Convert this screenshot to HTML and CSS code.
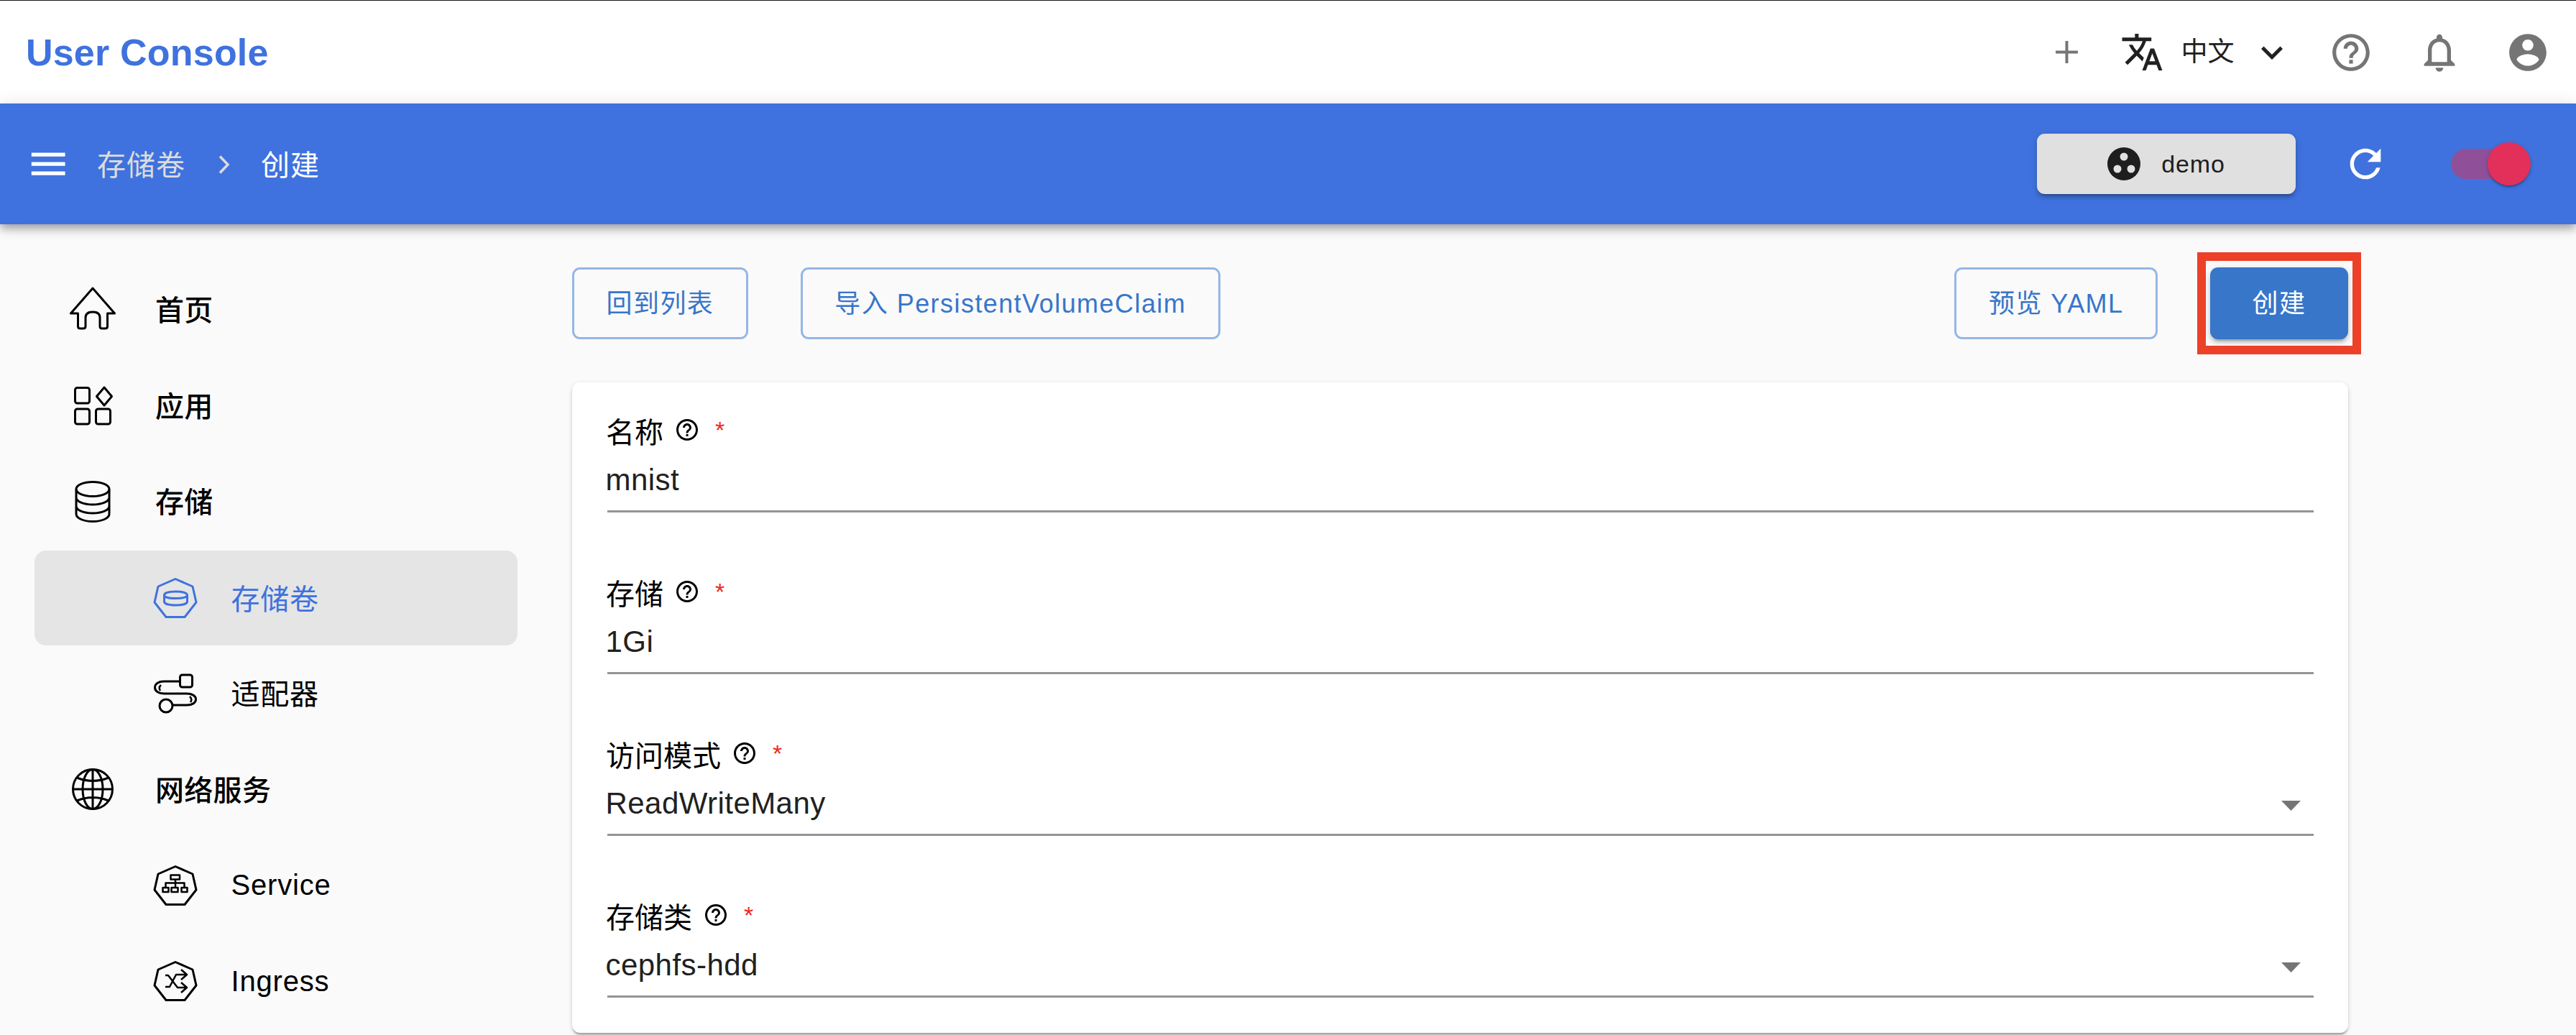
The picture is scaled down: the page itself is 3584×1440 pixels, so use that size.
FILE: index.html
```html
<!DOCTYPE html>
<html lang="zh-CN">
<head>
<meta charset="utf-8">
<title>User Console</title>
<link rel="stylesheet" href="styles.css">
</head>
<body>
<header class="topbar">
  <div class="logo">User Console</div>
  <div class="top-actions">
    <svg class="ic ic-plus" viewBox="0 0 24 24"><path d="M19 12.9h-6.1V19h-1.8v-6.100H5v-1.800h6.100V5h1.800v6.100H19z"/></svg>
    <svg class="ic ic-translate" viewBox="0 0 24 24"><path d="M12.870 15.070l-2.540-2.510.030-.030c1.740-1.940 2.980-4.170 3.710-6.530H17V4h-7V2H8v2H1v1.990h11.170C11.500 7.920 10.440 9.750 9 11.350 8.070 10.320 7.300 9.190 6.690 8h-2c.730 1.630 1.730 3.170 2.980 4.560l-5.090 5.020L4 19l5-5 3.110 3.110.760-2.040zM18.500 10h-2L12 22h2l1.120-3h4.750L21 22h2l-4.500-12zm-2.620 7l1.620-4.330L19.120 17h-3.240z"/></svg>
    <span class="lang">中文</span>
    <svg class="ic ic-chev" viewBox="0 0 24 24"><path d="M16.590 8.590L12 13.170 7.410 8.590 6 10l6 6 6-6z"/></svg>
    <svg class="ic ic-help" viewBox="0 0 24 24"><path d="M11 18h2v-2h-2v2zm1-16C6.480 2 2 6.480 2 12s4.480 10 10 10 10-4.480 10-10S17.520 2 12 2zm0 18c-4.410 0-8-3.590-8-8s3.590-8 8-8 8 3.590 8 8-3.590 8-8 8zm0-14c-2.210 0-4 1.790-4 4h2c0-1.100.900-2 2-2s2 .900 2 2c0 2-3 1.750-3 5h2c0-2.250 3-2.500 3-5 0-2.210-1.790-4-4-4z"/></svg>
    <svg class="ic ic-bell" viewBox="0 0 24 24"><path d="M12 22c1.100 0 2-.900 2-2h-4c0 1.100.890 2 2 2zm6-6v-5c0-3.070-1.640-5.640-4.500-6.320V4c0-.830-.670-1.500-1.500-1.500s-1.500.670-1.500 1.500v.680C7.630 5.360 6 7.920 6 11v5l-2 2v1h16v-1l-2-2zm-2 1H8v-6c0-2.480 1.510-4.500 4-4.500s4 2.020 4 4.500v6z"/></svg>
    <svg class="ic ic-account" viewBox="0 0 24 24"><path d="M12 2C6.480 2 2 6.480 2 12s4.480 10 10 10 10-4.480 10-10S17.520 2 12 2zm0 3c1.660 0 3 1.340 3 3s-1.340 3-3 3-3-1.340-3-3 1.340-3 3-3zm0 14.200c-2.500 0-4.710-1.280-6-3.220.030-1.990 4-3.080 6-3.080 1.990 0 5.970 1.090 6 3.080-1.290 1.940-3.500 3.220-6 3.220z"/></svg>
  </div>
</header>

<div class="appbar">
  <div class="crumbs">
    <svg class="ic ic-menu" viewBox="0 0 24 24"><path d="M3 18h18v-2H3v2zm0-5h18v-2H3v2zm0-7v2h18V6H3z"/></svg>
    <span class="crumb">存储卷</span>
    <svg class="crumb-sep" viewBox="0 0 16 26"><path d="M2 1.500 13 13 2 24.500"/></svg>
    <span class="crumb crumb-now">创建</span>
  </div>
  <div class="bar-actions">
    <button class="ns-btn">
      <svg class="ns-ic" viewBox="0 0 46 46"><circle class="ns-disc" cx="23" cy="23" r="23"/><circle class="ns-dot" cx="23" cy="13" r="5.500"/><circle class="ns-dot" cx="14" cy="30" r="5.500"/><circle class="ns-dot" cx="33" cy="30" r="5.500"/></svg>
      <span>demo</span>
    </button>
    <svg class="ic ic-refresh" viewBox="0 0 24 24"><path d="M17.650 6.350C16.200 4.900 14.210 4 12 4c-4.420 0-7.990 3.580-7.990 8s3.570 8 7.990 8c3.730 0 6.840-2.550 7.730-6h-2.080c-.820 2.330-3.040 4-5.650 4-3.310 0-6-2.690-6-6s2.690-6 6-6c1.660 0 3.140.690 4.220 1.780L13 11h7V4l-2.350 2.350z"/></svg>
    <div class="switch"><span class="track"></span><span class="thumb"></span></div>
  </div>
</div>

<div class="layout">
  <nav class="side">
    <a class="row">
      <svg class="nav-ic" viewBox="0 0 64 64"><path d="M32 2 1.500 37H11.500V55Q11.500 58 14.500 58H19Q22 58 22 55V43Q22 35 32 35T42 43V55Q42 58 45 58H49.500Q52.500 58 52.500 55V37H62.500Z"/></svg>
      <span>首页</span>
    </a>
    <a class="row">
      <svg class="nav-ic" viewBox="0 0 64 64"><rect x="7.500" y="7.500" width="20" height="21.500" rx="3"/><rect x="7.500" y="37" width="20" height="21" rx="3"/><rect x="36.500" y="37" width="20" height="21" rx="3"/><path d="M48 7 58.500 19.500 48 32 37.500 19.500Z"/></svg>
      <span>应用</span>
    </a>
    <a class="row">
      <svg class="nav-ic" viewBox="0 0 64 64"><g transform="translate(7 3)"><ellipse cx="25" cy="11.500" rx="23" ry="10"/><path d="M2 11.500V46C2 52 12 56.500 25 56.500S48 52 48 46V11.500M2 23C2 28.500 12 33 25 33S48 28.500 48 23M2 35C2 40.500 12 45 25 45S48 40.500 48 35"/></g></svg>
      <span>存储</span>
    </a>
    <a class="row sub active">
      <svg class="sub-ic" viewBox="0 0 60 56"><path d="M30 1.500 54 12 59 34 43 54.500H17L1 34 6 12Z"/><path d="M14.500 24V33C14.500 36 21 38 30.500 38S46.500 36 46.500 33V24M14.500 24C14.500 21 21 19 30.500 19S46.500 21 46.500 24 40 28.500 30.500 28.500 14.500 27 14.500 24Z"/></svg>
      <span>存储卷</span>
    </a>
    <a class="row sub">
      <svg class="sub-ic" viewBox="14 9 60 56"><rect x="50.500" y="11" width="17" height="17" rx="3"/><path d="M50 20H28C21 20 15.500 23 15.500 28.500S21 37 28 37H60C67 37 72.500 40 72.500 45S67 53 60 53H40"/><circle cx="31" cy="54" r="9"/><path class="thin" d="M24 25Q20 28.500 23 33M64 41Q68 45 65 49"/></svg>
      <span>适配器</span>
    </a>
    <a class="row">
      <svg class="nav-ic" viewBox="0 0 64 64"><g transform="translate(3 3)"><circle cx="29" cy="29" r="27.500"/><ellipse cx="29" cy="29" rx="14" ry="27.500"/><path d="M29 1.500V56.500M1.500 29H56.500M7 13Q29 22 51 13M7 45Q29 36 51 45"/></g></svg>
      <span>网络服务</span>
    </a>
    <a class="row sub">
      <svg class="sub-ic" viewBox="0 0 60 56"><path d="M30 1.500 54 12 59 34 43 54.500H17L1 34 6 12Z"/><path class="thin" d="M23.500 13.500H36V19.500H23.500ZM12.500 31H20.500V37H12.500ZM24.500 31H33.500V37H24.500ZM38.500 31H46.500V37H38.500ZM30 19.500V31M16.500 31V24.500H42.500V31"/></svg>
      <span class="latin">Service</span>
    </a>
    <a class="row sub">
      <svg class="sub-ic" viewBox="0 0 60 56"><path d="M30 1.500 54 12 59 34 43 54.500H17L1 34 6 12Z"/><path class="thin" d="M16 20H20L33 37H46M16 36H22L31 19H46M38 12 46 19 38 26M38 30 46 37 38 44"/></svg>
      <span class="latin">Ingress</span>
    </a>
  </nav>

  <main class="content">
    <div class="toolbar">
      <div class="tool-group">
        <button class="btn">回到列表</button>
        <button class="btn">导入 PersistentVolumeClaim</button>
      </div>
      <div class="tool-group">
        <button class="btn">预览 YAML</button>
        <button class="btn btn-primary">创建</button>
      </div>
    </div>

    <section class="card">
      <div class="field">
        <div class="label">名称<svg class="tip" viewBox="0 0 24 24"><path d="M11 18h2v-2h-2v2zm1-16C6.480 2 2 6.480 2 12s4.480 10 10 10 10-4.480 10-10S17.520 2 12 2zm0 18c-4.410 0-8-3.590-8-8s3.590-8 8-8 8 3.590 8 8-3.590 8-8 8zm0-14c-2.210 0-4 1.790-4 4h2c0-1.100.900-2 2-2s2 .900 2 2c0 2-3 1.750-3 5h2c0-2.250 3-2.500 3-5 0-2.210-1.790-4-4-4z"/></svg><span class="req">*</span></div>
        <div class="value">mnist</div>
      </div>
      <div class="field">
        <div class="label">存储<svg class="tip" viewBox="0 0 24 24"><path d="M11 18h2v-2h-2v2zm1-16C6.480 2 2 6.480 2 12s4.480 10 10 10 10-4.480 10-10S17.520 2 12 2zm0 18c-4.410 0-8-3.590-8-8s3.590-8 8-8 8 3.590 8 8-3.590 8-8 8zm0-14c-2.210 0-4 1.790-4 4h2c0-1.100.900-2 2-2s2 .900 2 2c0 2-3 1.750-3 5h2c0-2.250 3-2.500 3-5 0-2.210-1.790-4-4-4z"/></svg><span class="req">*</span></div>
        <div class="value">1Gi</div>
      </div>
      <div class="field">
        <div class="label">访问模式<svg class="tip" viewBox="0 0 24 24"><path d="M11 18h2v-2h-2v2zm1-16C6.480 2 2 6.480 2 12s4.480 10 10 10 10-4.480 10-10S17.520 2 12 2zm0 18c-4.410 0-8-3.590-8-8s3.590-8 8-8 8 3.590 8 8-3.590 8-8 8zm0-14c-2.210 0-4 1.790-4 4h2c0-1.100.900-2 2-2s2 .900 2 2c0 2-3 1.750-3 5h2c0-2.250 3-2.500 3-5 0-2.210-1.790-4-4-4z"/></svg><span class="req">*</span></div>
        <div class="value">ReadWriteMany<svg class="caret" viewBox="0 0 27 14"><path d="M0 0H27L13.500 14Z"/></svg></div>
      </div>
      <div class="field">
        <div class="label">存储类<svg class="tip" viewBox="0 0 24 24"><path d="M11 18h2v-2h-2v2zm1-16C6.480 2 2 6.480 2 12s4.480 10 10 10 10-4.480 10-10S17.520 2 12 2zm0 18c-4.410 0-8-3.590-8-8s3.590-8 8-8 8 3.590 8 8-3.590 8-8 8zm0-14c-2.210 0-4 1.790-4 4h2c0-1.100.900-2 2-2s2 .900 2 2c0 2-3 1.750-3 5h2c0-2.250 3-2.500 3-5 0-2.210-1.790-4-4-4z"/></svg><span class="req">*</span></div>
        <div class="value">cephfs-hdd<svg class="caret" viewBox="0 0 27 14"><path d="M0 0H27L13.500 14Z"/></svg></div>
      </div>
    </section>
  </main>
</div>
</body>
</html>
```

FILE: styles.css
```css
* { box-sizing: border-box; }
html, body { margin: 0; height: 1440px; overflow: hidden; }
body {
  width: 3584px;
  background: #fafafa;
  color: #000;
  font-family: "Liberation Sans", "Noto Sans CJK SC", sans-serif;
}
.ic { display: block; flex: none; }

/* top white header */
.topbar {
  height: 144px;
  border-top: 1px solid #1a1a1a;
  background: #fff;
  display: flex;
  align-items: center;
  justify-content: space-between;
  padding: 0 36.5px 0 36px;
}
.logo { font-size: 52px; font-weight: 700; color: #3f72de; letter-spacing: .2px; }
.top-actions { display: flex; align-items: center; }
.ic-plus { width: 53px; height: 53px; fill: #757575; }
.ic-translate { width: 61px; height: 61px; fill: #212121; margin-left: 47.500px; }
.lang { font-size: 37px; color: #212121; margin-left: 24px; line-height: 44px; }
.ic-chev { width: 60px; height: 60px; fill: #212121; margin-left: 22.500px; }
.ic-help { width: 62px; height: 62px; fill: #757575; margin-left: 49px; }
.ic-bell { width: 64px; height: 64px; fill: #757575; margin-left: 59.500px; }
.ic-account { width: 62px; height: 62px; fill: #757575; margin-left: 60px; }

/* blue bar */
.appbar {
  position: relative;
  z-index: 2;
  height: 168px;
  background: #3f72de;
  display: flex;
  align-items: center;
  justify-content: space-between;
  padding: 0 63px 0 36px;
  box-shadow: 0 5px 10px -2px rgba(0,0,0,.2), 0 9px 11px 0 rgba(0,0,0,.14), 0 2px 23px 0 rgba(0,0,0,.12);
}
.crumbs { display: flex; align-items: center; }
.ic-menu { width: 62.400px; height: 62.400px; fill: #fff; }
.crumb { font-size: 40px; letter-spacing: 1px; color: #dcdcdc; margin-left: 36.500px; line-height: 50px; padding-top: 4px; }
.crumb-sep { width: 16px; height: 26px; margin: 3px 0 0 46px; fill: none; stroke: #dcdcdc; stroke-width: 3.500px; }
.crumb-now { color: #fff; margin-left: 43px; }
.bar-actions { display: flex; align-items: center; }
.ns-btn {
  width: 360px;
  height: 84px;
  border: 0;
  border-radius: 11px;
  background: #e0e0e0;
  display: flex;
  align-items: center;
  justify-content: center;
  gap: 29px;
  padding: 0;
  font: 500 34px "Liberation Sans", sans-serif;
  letter-spacing: .9px;
  color: #1e1e1e;
  box-shadow: 0 7px 3px -5px rgba(0,0,0,.2), 0 5px 5px 0 rgba(0,0,0,.14), 0 2px 11px 0 rgba(0,0,0,.12);
}
.ns-ic { width: 46px; height: 46px; flex: none; }
.ns-disc { fill: #1e1e1e; }
.ns-dot { fill: #e0e0e0; }
.ic-refresh { width: 64px; height: 64px; fill: #fff; margin-left: 65px; }
.switch { position: relative; width: 111px; height: 60px; margin-left: 87px; }
.track { position: absolute; left: 0; top: 9px; width: 92px; height: 42px; border-radius: 21px; background: #8f5099; }
.thumb {
  position: absolute; right: 0; top: 0; width: 60px; height: 60px; border-radius: 50%;
  background: #e2305a;
  box-shadow: 0 4px 3px -2px rgba(0,0,0,.2), 0 2px 3px 0 rgba(0,0,0,.14), 0 2px 7px 0 rgba(0,0,0,.12);
}

/* body layout */
.layout { display: flex; align-items: flex-start; }
.side { width: 768px; flex: none; padding: 51.750px 48px 0; }
.row {
  height: 133.500px;
  display: flex;
  align-items: center;
  padding-left: 48.500px;
  gap: 55.500px;
  font-size: 40px;
  font-weight: 500;
  letter-spacing: .3px;
  color: #000;
}
.row span { padding-bottom: 3px; }
.row .latin { padding-bottom: 0; }
.row.sub { padding-left: 166px; gap: 47.500px; font-weight: 400; letter-spacing: .8px; }
.row.active {
  height: 131.500px;
  margin-top: 2px;
  background: #e5e5e5;
  border-radius: 16px;
  color: #3f72de;
}
.nav-ic { width: 64px; height: 64px; flex: none; fill: none; stroke: #000; stroke-width: 3px; stroke-linejoin: round; }
.sub-ic { width: 60px; height: 56px; flex: none; fill: none; stroke: #000; stroke-width: 3px; stroke-linejoin: round; overflow: visible; }
.active .sub-ic { stroke: #3f72de; }
.sub-ic .thin { stroke-width: 2.500px; }

/* content */
.content { flex: 1; min-width: 0; padding: 60px 317px 0 28px; }
.toolbar { display: flex; justify-content: space-between; height: 100px; margin-bottom: 60px; }
.tool-group { display: flex; gap: 73px; }
.btn {
  height: 100px;
  padding: 0 44.500px 6px;
  border: 3px solid #94b7e5;
  border-radius: 11px;
  background: transparent;
  color: #3776c9;
  font: 400 36px "Liberation Sans", "Noto Sans CJK SC", sans-serif;
  letter-spacing: 1.450px;
  white-space: nowrap;
}
.btn-primary {
  position: relative;
  width: 192px;
  padding: 0 0 6px;
  border: 0;
  background: #3776c9;
  color: #fff;
  box-shadow: 0 7px 3px -5px rgba(0,0,0,.2), 0 5px 5px 0 rgba(0,0,0,.14), 0 2px 11px 0 rgba(0,0,0,.12);
}
.btn-primary::after {
  content: "";
  position: absolute;
  inset: -21px -18px;
  border: 12px solid #ec4027;
}

.card {
  width: 2471px;
  height: 905px;
  background: #fff;
  border-radius: 11px;
  padding: 46px 48px 48px 49px;
  box-shadow: 0 5px 3px -2px rgba(0,0,0,.2), 0 2px 3px 0 rgba(0,0,0,.14), 0 2px 7px 0 rgba(0,0,0,.12);
}
.field { margin-bottom: 90px; }
.field:last-child { margin-bottom: 0; }
.label { display: flex; align-items: center; height: 44px; margin-left: -2px; padding-top: 3px; font-size: 40px; line-height: 44px; color: #000; }
.tip { width: 36px; height: 36px; margin-left: 15px; fill: #000; flex: none; transform: translateY(-4px); }
.req { color: #f0281e; font-size: 34px; margin-left: 21px; line-height: 44px; transform: translateY(-4px); }
.value {
  display: flex;
  justify-content: space-between;
  align-items: flex-start;
  height: 91px;
  padding: 16px 18px 12px 0;
  border-bottom: 3px solid #949494;
  font-size: 42px;
  line-height: 60px;
  letter-spacing: .45px;
  text-indent: -2.500px;
  color: #212121;
}
.caret { width: 27px; height: 14px; margin-top: 26px; fill: #757575; flex: none; }
```
